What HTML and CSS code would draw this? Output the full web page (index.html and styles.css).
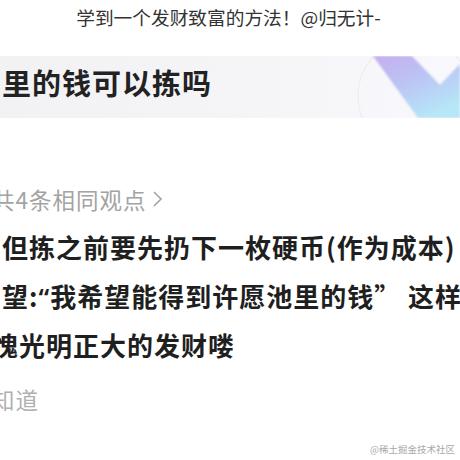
FILE: index.html
```html
<!DOCTYPE html>
<html lang="zh-CN">
<head>
<meta charset="utf-8">
<title>发财致富</title>
<link rel="stylesheet" href="styles.css">
</head>
<body>
<div class="page">
  <h1 class="caption">学到一个发财致富的方法！@归无计-</h1>
  <div class="banner">
    <h2 class="banner-title">里的钱可以拣吗</h2>
    <svg class="deco" width="120" height="62" viewBox="0 0 120 62" aria-hidden="true">
      <defs>
        <linearGradient id="g" x1="0" y1="0" x2="0.6" y2="1">
          <stop offset="0" stop-color="#c6aef0"/>
          <stop offset="0.45" stop-color="#bcc2f4"/>
          <stop offset="1" stop-color="#b6e6f8"/>
        </linearGradient>
        <filter id="b" x="-10%" y="-10%" width="120%" height="120%">
          <feGaussianBlur stdDeviation="1.2"/>
        </filter>
      </defs>
      <circle cx="75" cy="40" r="57" fill="none" stroke="#ecebf2" stroke-width="1.2"/>
      <polygon points="33,0 72,0 100,29 120,8 120,62 78,62" fill="url(#g)" filter="url(#b)"/>
    </svg>
  </div>
  <p class="views">共4条相同观点<svg class="chev" width="11" height="18" viewBox="0 0 11 18"><polyline points="2,2 9,9 2,16" fill="none" stroke="#a3a3a3" stroke-width="1.6"/></svg></p>
  <div class="answer">
    <p class="line">但拣之前要先扔下一枚硬币(作为成本)</p>
    <p class="line">望:<span class="q">“</span>我希望能得到许愿池里的钱” 这样就</p>
    <p class="line line-shift">愧光明正大的发财喽</p>
  </div>
  <p class="muted">知道</p>
  <div class="watermark">@稀土掘金技术社区</div>
</div>
</body>
</html>
```
FILE: styles.css
```css
html, body {
  margin: 0;
  padding: 0;
  background: #ffffff;
}
body {
  font-family: "Noto Sans CJK SC", "Noto Sans", sans-serif;
  overflow: hidden;
}
.page {
  position: relative;
  width: 460px;
  height: 460px;
  overflow: hidden;
}
.caption {
  margin: 0;
  font-size: 18.7px;
  line-height: 34px;
  font-weight: 400;
  color: #333333;
  text-align: center;
  padding-right: 3px;
}
.banner {
  margin-top: 22px;
  height: 62px;
  display: flex;
  align-items: flex-start;
  position: relative;
  background: linear-gradient(90deg, #f2f2f5 0%, #f5f5f8 55%, #f9f8fc 100%);
  overflow: hidden;
}
.banner-title {
  margin: 0;
  padding: 5px 0 0 2px;
  font-size: 29px;
  line-height: 42px;
  font-weight: 700;
  letter-spacing: 1px;
  color: #222222;
  white-space: nowrap;
}
.deco {
  position: absolute;
  right: 0;
  top: 0;
}
.views {
  margin: 65px 0 0 -8px;
  font-size: 22.5px;
  line-height: 32px;
  letter-spacing: 1px;
  color: #a3a3a3;
  display: flex;
  align-items: center;
  white-space: nowrap;
}
.chev {
  margin-left: 5px;
}
.answer {
  margin-top: 8px;
}
.line {
  margin: 0;
  padding-left: 2px;
  font-size: 26px;
  line-height: 48.5px;
  letter-spacing: 1px;
  font-weight: 600;
  color: #1f1f1f;
  white-space: nowrap;
}
.q {
  font-family: "Noto Sans", sans-serif;
}
.line-shift {
  margin-left: -10px;
}
.muted {
  margin: 13px 0 0 -8px;
  font-size: 22.5px;
  line-height: 32px;
  letter-spacing: 1px;
  color: #b0b0b0;
  white-space: nowrap;
}
.watermark {
  position: absolute;
  right: 5px;
  bottom: 4px;
  font-size: 9.5px;
  line-height: 14px;
  color: #a8a8a8;
  font-family: "Noto Sans CJK SC", serif;
}
```
